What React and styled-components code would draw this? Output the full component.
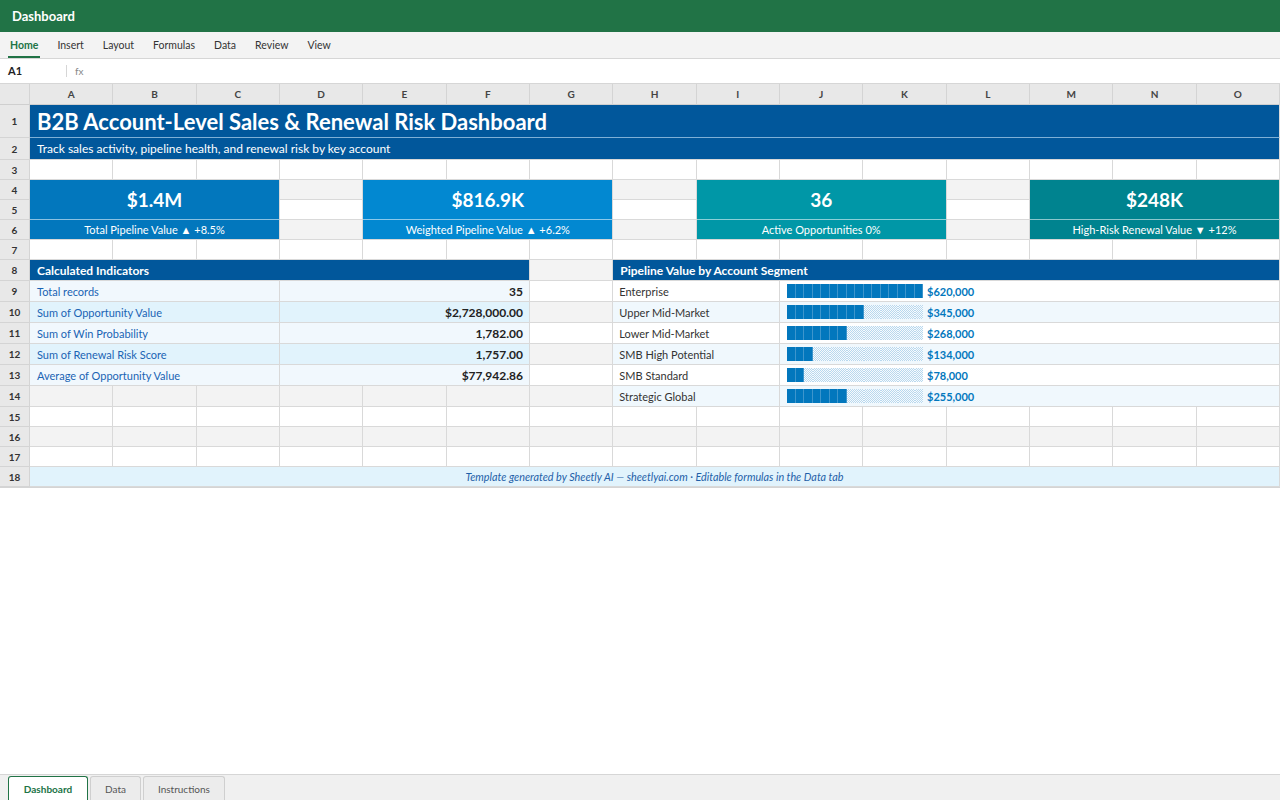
import React from 'react';
import styled, { createGlobalStyle } from 'styled-components';

const GlobalStyle = createGlobalStyle`
  * { box-sizing: border-box; }
  html, body { margin: 0; padding: 0; height: 100%; }
  body {
    font-family: Lato, 'Open Sans', 'Liberation Sans', sans-serif;
    background: #fff;
    color: #222;
    overflow: hidden;
  }
  #root { height: 100%; }
`;

const Shell = styled.div`
  display: flex;
  flex-direction: column;
  height: 100vh;
`;

const TitleBar = styled.header`
  height: 32px;
  flex: none;
  background: #217346;
  color: #fff;
  font-size: 13px;
  font-weight: 700;
  display: flex;
  align-items: center;
  padding: 0 12px;
`;

const Ribbon = styled.nav`
  height: 27px;
  flex: none;
  background: #f3f3f3;
  border-bottom: 1px solid #d6d6d6;
  display: flex;
  align-items: stretch;
  gap: 15px;
  padding-left: 8px;
`;

const RibbonTab = styled.div`
  padding: 1px 2px 0;
  display: flex;
  align-items: center;
  font-size: 10.5px;
  color: ${(p) => (p.$active ? '#217346' : '#333')};
  font-weight: ${(p) => (p.$active ? 700 : 400)};
  border-bottom: 2px solid ${(p) => (p.$active ? '#217346' : 'transparent')};
`;

const FormulaBar = styled.div`
  height: 25px;
  flex: none;
  display: flex;
  align-items: center;
  border-bottom: 1px solid #d6d6d6;
  font-size: 11px;
`;

const NameBox = styled.div`
  width: 67px;
  padding-left: 8px;
  font-weight: 700;
  border-right: 1px solid #d6d6d6;
  line-height: 12px;
`;

const Fx = styled.div`
  padding-left: 8px;
  color: #888;
  font-size: 10px;
`;

const SheetArea = styled.div`
  flex: 1;
  background: #fff;
`;

const Grid = styled.div`
  display: grid;
  grid-template-columns: 30px repeat(15, 1fr);
  grid-template-rows: 21px 33px 22px repeat(5, 20px) 21px repeat(6, 21px) repeat(4, 20px);
  border-bottom: 1px solid #d4d4d4;
`;

const ColHead = styled.div`
  background: #e8e8e8;
  border-right: 1px solid #d4d4d4;
  border-bottom: 1px solid #cfcfcf;
  display: flex;
  align-items: center;
  justify-content: center;
  font-size: 10px;
  font-weight: 700;
  color: #444;
`;

const RowHead = styled.div`
  background: #e8e8e8;
  border-right: 1px solid #d4d4d4;
  border-bottom: 1px solid #d4d4d4;
  display: flex;
  align-items: center;
  justify-content: center;
  font-size: 10px;
  font-weight: 700;
  color: #333;
`;

const Cell = styled.div`
  grid-column: span ${(p) => p.$span || 1};
  grid-row: span ${(p) => p.$rows || 1};
  background: ${(p) => (p.$shade ? '#f3f3f3' : '#fff')};
  border-right: 1px solid #d9d9d9;
  border-bottom: 1px solid #d9d9d9;
  min-width: 0;
  white-space: nowrap;
`;

const TitleCell = styled(Cell)`
  background: #01579b;
  color: #fff;
  font-size: 22px;
  font-weight: 700;
  display: flex;
  align-items: center;
  padding-left: 7px;
  border-bottom-color: #7fb0d6;
`;

const SubtitleCell = styled(Cell)`
  background: #01579b;
  color: #fff;
  font-size: 12px;
  display: flex;
  align-items: center;
  padding-left: 7px;
`;

const KpiValue = styled(Cell)`
  background: ${(p) => p.$bg};
  color: #fff;
  font-size: 19px;
  font-weight: 700;
  display: flex;
  align-items: center;
  justify-content: center;
  border-bottom-color: rgba(255, 255, 255, 0.55);
  padding-bottom: 1px;
`;

const KpiLabel = styled(Cell)`
  background: ${(p) => p.$bg};
  color: #fff;
  font-size: 11px;
  display: flex;
  align-items: center;
  justify-content: center;
`;

const SectionHead = styled(Cell)`
  background: #01579b;
  color: #fff;
  font-size: 12px;
  font-weight: 700;
  display: flex;
  align-items: center;
  padding-left: 7px;
`;

const MetricLabel = styled(Cell)`
  background: ${(p) => (p.$alt ? '#e1f3fc' : '#f1f8fd')};
  color: #1a64b4;
  font-size: 11px;
  display: flex;
  align-items: center;
  padding-left: 7px;
`;

const MetricValue = styled(Cell)`
  background: ${(p) => (p.$alt ? '#e1f3fc' : '#f1f8fd')};
  color: #222;
  font-size: 12px;
  font-weight: 700;
  display: flex;
  align-items: center;
  justify-content: flex-end;
  padding-right: 6px;
`;

const SegLabel = styled(Cell)`
  background: ${(p) => (p.$alt ? '#f0f8fd' : '#fff')};
  color: #333;
  font-size: 11px;
  display: flex;
  align-items: center;
  padding-left: 6px;
`;

const SegChart = styled(Cell)`
  background: ${(p) => (p.$alt ? '#f0f8fd' : '#fff')};
  display: flex;
  align-items: center;
  gap: 4px;
  padding-left: 7px;
`;

const Bar = styled.div`
  display: flex;
  height: 14px;
`;

const Block = styled.div`
  width: 8.5px;
  height: 100%;
  background: ${(p) =>
    p.$on
      ? '#0277bd'
      : 'repeating-conic-gradient(#b8d8ee 0 25%, #f6fafd 0 50%) 0 0 / 2px 2px'};
  border-right: ${(p) => (p.$on ? '1px solid #3d95cc' : 'none')};
`;

const SegValue = styled.span`
  color: #0277bd;
  font-size: 11px;
  font-weight: 700;
`;

const FooterCell = styled(Cell)`
  background: #e1f3fc;
  color: #1f5fa8;
  font-size: 10.8px;
  font-style: italic;
  display: flex;
  align-items: center;
  justify-content: center;
`;

const SheetTabs = styled.div`
  height: 26px;
  flex: none;
  background: #f0f0f0;
  border-top: 1px solid #d6d6d6;
  display: flex;
  align-items: flex-end;
  gap: 2px;
  padding-left: 8px;
`;

const SheetTab = styled.div`
  height: 24px;
  padding: 0 14px;
  display: flex;
  align-items: center;
  justify-content: center;
  font-size: 10px;
  color: ${(p) => (p.$active ? '#217346' : '#555')};
  font-weight: ${(p) => (p.$active ? 700 : 400)};
  background: ${(p) => (p.$active ? '#fff' : '#ececec')};
  border: ${(p) => (p.$active ? '1.5px solid #217346' : '1px solid #cfcfcf')};
  border-bottom: none;
  border-radius: 3px 3px 0 0;
  min-width: ${(p) => (p.$active ? '80px' : '0')};
`;

const COLS = 'ABCDEFGHIJKLMNO'.split('');

const kpis = [
  { value: '$1.4M', label: 'Total Pipeline Value ▲ +8.5%', bg: '#0277bd' },
  { value: '$816.9K', label: 'Weighted Pipeline Value ▲ +6.2%', bg: '#0288d1' },
  { value: '36', label: 'Active Opportunities 0%', bg: '#0097a7' },
  { value: '$248K', label: 'High-Risk Renewal Value ▼ +12%', bg: '#00838f' },
];

const metrics = [
  ['Total records', '35'],
  ['Sum of Opportunity Value', '$2,728,000.00'],
  ['Sum of Win Probability', '1,782.00'],
  ['Sum of Renewal Risk Score', '1,757.00'],
  ['Average of Opportunity Value', '$77,942.86'],
];

const segments = [
  ['Enterprise', 620000],
  ['Upper Mid-Market', 345000],
  ['Lower Mid-Market', 268000],
  ['SMB High Potential', 134000],
  ['SMB Standard', 78000],
  ['Strategic Global', 255000],
];

const maxSeg = Math.max(...segments.map((s) => s[1]));
const money = (n) => '$' + n.toLocaleString('en-US');

function Blank({ row, n = 1 }) {
  return Array.from({ length: n }, (_, i) => <Cell key={i} $shade={row % 2 === 0} />);
}

function SegmentBar({ value }) {
  const filled = Math.round((value / maxSeg) * 16);
  return (
    <Bar>
      {Array.from({ length: 16 }, (_, i) => (
        <Block key={i} $on={i < filled} />
      ))}
    </Bar>
  );
}

export default function App() {
  return (
    <Shell>
      <GlobalStyle />
      <TitleBar>Dashboard</TitleBar>
      <Ribbon>
        {['Home', 'Insert', 'Layout', 'Formulas', 'Data', 'Review', 'View'].map((t, i) => (
          <RibbonTab key={t} $active={i === 0}>{t}</RibbonTab>
        ))}
      </Ribbon>
      <FormulaBar>
        <NameBox>A1</NameBox>
        <Fx>fx</Fx>
      </FormulaBar>
      <SheetArea>
        <Grid>
          <ColHead />
          {COLS.map((c) => (
            <ColHead key={c}>{c}</ColHead>
          ))}

          <RowHead>1</RowHead>
          <TitleCell $span={15}>B2B Account-Level Sales &amp; Renewal Risk Dashboard</TitleCell>

          <RowHead>2</RowHead>
          <SubtitleCell $span={15}>
            Track sales activity, pipeline health, and renewal risk by key account
          </SubtitleCell>

          <RowHead>3</RowHead>
          <Blank row={3} n={15} />

          <RowHead>4</RowHead>
          {kpis.map((k, i) => (
            <React.Fragment key={k.value}>
              <KpiValue $span={3} $rows={2} $bg={k.bg}>{k.value}</KpiValue>
              {i < 3 && <Cell $shade />}
            </React.Fragment>
          ))}

          <RowHead>5</RowHead>
          <Blank row={5} n={3} />

          <RowHead>6</RowHead>
          {kpis.map((k, i) => (
            <React.Fragment key={k.label}>
              <KpiLabel $span={3} $bg={k.bg}>{k.label}</KpiLabel>
              {i < 3 && <Cell $shade />}
            </React.Fragment>
          ))}

          <RowHead>7</RowHead>
          <Blank row={7} n={15} />

          <RowHead>8</RowHead>
          <SectionHead $span={6}>Calculated Indicators</SectionHead>
          <Cell $shade />
          <SectionHead $span={8}>Pipeline Value by Account Segment</SectionHead>

          {segments.map(([name, value], i) => {
            const row = 9 + i;
            const metric = metrics[i];
            return (
              <React.Fragment key={name}>
                <RowHead>{row}</RowHead>
                {metric ? (
                  <>
                    <MetricLabel $span={3} $alt={i % 2 === 1}>{metric[0]}</MetricLabel>
                    <MetricValue $span={3} $alt={i % 2 === 1}>{metric[1]}</MetricValue>
                  </>
                ) : (
                  <Blank row={row} n={6} />
                )}
                <Cell $shade={row % 2 === 0} />
                <SegLabel $span={2} $alt={i % 2 === 1}>{name}</SegLabel>
                <SegChart $span={6} $alt={i % 2 === 1}>
                  <SegmentBar value={value} />
                  <SegValue>{money(value)}</SegValue>
                </SegChart>
              </React.Fragment>
            );
          })}

          {[15, 16, 17].map((row) => (
            <React.Fragment key={row}>
              <RowHead>{row}</RowHead>
              <Blank row={row} n={15} />
            </React.Fragment>
          ))}

          <RowHead>18</RowHead>
          <FooterCell $span={15}>
            Template generated by Sheetly AI — sheetlyai.com · Editable formulas in the Data tab
          </FooterCell>
        </Grid>
      </SheetArea>
      <SheetTabs>
        <SheetTab $active>Dashboard</SheetTab>
        <SheetTab>Data</SheetTab>
        <SheetTab>Instructions</SheetTab>
      </SheetTabs>
    </Shell>
  );
}
